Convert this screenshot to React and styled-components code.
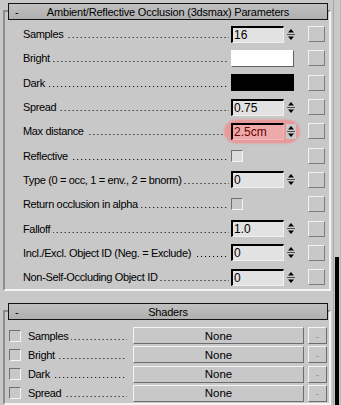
import React from 'react'
import styled, { createGlobalStyle } from 'styled-components'

const Global = createGlobalStyle`
  html, body { margin: 0; padding: 0; }
  body {
    background: #c8c8c8;
    font-family: "Liberation Sans", Arial, sans-serif;
    font-size: 11px;
    letter-spacing: -0.35px;
    color: #000;
  }
`

const Page = styled.div`
  width: 341px;
  height: 405px;
  overflow: hidden;
  display: flex;
  background: #c8c8c8;
`

const Column = styled.div`
  width: 331px;
  display: flex;
  flex-direction: column;
`

const ScrollStrip = styled.div`
  width: 10px;
  display: flex;
  flex-direction: column;
  border-left: 2px solid #c8c8c8;
  box-sizing: border-box;
`

const Track = styled.div`
  flex: 1;
  border-left: 1px solid #a8a8a8;
  border-right: 1px solid #b8b8b8;
  display: flex;
  flex-direction: column;
  justify-content: flex-end;
`

const Thumb = styled.div`
  height: 148px;
  margin: 0 1px;
  background: #000;
`

const Frame = styled.div`
  margin: ${p => p.$top}px 0 0 3px;
  border: 2px solid;
  border-color: #8c8c8c #f4f4f4 #f4f4f4 #8c8c8c;
  display: flex;
  flex-direction: column;
  height: ${p => p.$height}px;
  box-sizing: border-box;
`

const Header = styled.div`
  margin: -9px 1px 0 3px;
  height: 17px;
  box-sizing: border-box;
  border: 1px solid #141414;
  background: linear-gradient(#c0c0c0, #b0b0b0);
  display: grid;
  grid-template-areas: 'bar';
  align-items: center;
  white-space: nowrap;
  letter-spacing: -0.2px;
`

const Toggle = styled.span`
  grid-area: bar;
  justify-self: start;
  padding-left: 6px;
`

const Title = styled.span`
  grid-area: bar;
  justify-self: center;
`

const Rows = styled.div`
  display: flex;
  flex-direction: column;
  padding: 2px 4px 0 18px;
`

const Row = styled.div`
  height: 24.3px;
  display: grid;
  grid-template-columns: 206px 66px 17px;
  column-gap: 2px;
  align-items: center;
  & > :last-child { margin-left: 9px; }
`

const Label = styled.div`
  display: flex;
  align-items: baseline;
  white-space: nowrap;
  overflow: hidden;
`

const Dots = styled.span`
  flex: 1;
  height: 1px;
  margin-left: 3px;
  background-image: linear-gradient(to right, #000 1px, transparent 1px);
  background-size: 4px 1px;
  background-repeat: repeat-x;
  background-position: right;
`

const Spin = styled.div`
  display: flex;
  align-items: center;
  gap: 2px;
  height: 17px;
  border-radius: 9px;
  ${p => p.$hot && `
    background: #e89a9a;
    box-shadow: 0 0 2px 3px #e89a9a, -4px 0 2px 3px #e89a9a;
  `}
`

const Field = styled.div`
  width: 53px;
  height: 17px;
  box-sizing: border-box;
  border-top: 2px solid #000;
  border-left: 2px solid #000;
  border-bottom: 1px solid ${p => (p.$hot ? '#f0b8b8' : '#f0f0f0')};
  border-right: 1px solid ${p => (p.$hot ? '#f0b8b8' : '#f0f0f0')};
  background: ${p => (p.$hot ? '#eeaaaa' : '#e2e2e2')};
  color: ${p => (p.$hot ? '#6a0000' : '#000')};
  font-size: 12px;
  letter-spacing: 0;
  line-height: 14px;
  padding-left: 1px;
`

const Arrows = styled.svg`
  width: 10px;
  height: 15px;
  display: block;
`

const Swatch = styled.div`
  width: 63px;
  height: 17px;
  box-sizing: border-box;
  background: ${p => p.$color};
  border: 1px solid;
  border-color: ${p => (p.$color === '#fff' ? '#fff #606060 #606060 #fff' : '#000')};
`

const Check = styled.div`
  width: 12px;
  height: 12px;
  box-sizing: border-box;
  border: 1px solid;
  border-color: #707070 #f4f4f4 #f4f4f4 #707070;
  background: ${p => (p.$light ? '#dcdcdc' : '#c8c8c8')};
`

const Square = styled.div`
  width: 17px;
  height: 16px;
  box-sizing: border-box;
  border: 1px solid;
  border-color: #f2f2f2 #7c7c7c #7c7c7c #f2f2f2;
  background: #c8c8c8;
`

const ShaderRows = styled.div`
  display: flex;
  flex-direction: column;
  gap: 2.2px;
  padding: 7px 2px 0 4px;
`

const ShaderRow = styled.div`
  height: 17px;
  display: grid;
  grid-template-columns: 12px 112px 171px 23px;
  align-items: center;
  & > :nth-child(2) { margin-left: 7px; padding-right: 6px; }
  & > :last-child { margin-left: 4px; }
`

const Btn = styled.div`
  height: 17px;
  box-sizing: border-box;
  border: 1px solid;
  border-color: #f4f4f4 #6c6c6c #6c6c6c #f4f4f4;
  background: #c8c8c8;
  display: flex;
  align-items: center;
  justify-content: center;
  font-size: 11.5px;
  letter-spacing: 0;
  color: ${p => (p.$dim ? '#9a9a9a' : '#000')};
`

const SpinArrows = () => (
  <Arrows viewBox="0 0 10 15">
    <rect x="0" y="0" width="10" height="15" fill="#c8c8c8" />
    <path d="M5 2 L8 5.5 L2 5.5 Z" fill="#000" />
    <line x1="1" y1="7.5" x2="9" y2="7.5" stroke="#505050" strokeWidth="1" />
    <path d="M2 9.5 L8 9.5 L5 13 Z" fill="#000" />
  </Arrows>
)

const params = [
  { label: 'Samples', kind: 'spin', value: '16' },
  { label: 'Bright', kind: 'swatch', color: '#fff' },
  { label: 'Dark', kind: 'swatch', color: '#000' },
  { label: 'Spread', kind: 'spin', value: '0.75' },
  { label: 'Max distance', kind: 'spin', value: '2.5cm', hot: true },
  { label: 'Reflective', kind: 'check', light: true },
  { label: 'Type (0 = occ, 1 = env., 2 = bnorm)', kind: 'spin', value: '0' },
  { label: 'Return occlusion in alpha', kind: 'check' },
  { label: 'Falloff', kind: 'spin', value: '1.0' },
  { label: 'Incl./Excl. Object ID (Neg. = Exclude)', kind: 'spin', value: '0' },
  { label: 'Non-Self-Occluding Object ID', kind: 'spin', value: '0' },
]

const shaders = ['Samples', 'Bright', 'Dark', 'Spread']

function Control({ p }) {
  if (p.kind === 'swatch') return <Swatch $color={p.color} />
  if (p.kind === 'check') return <div><Check $light={p.light} /></div>
  return (
    <Spin $hot={p.hot}>
      <Field $hot={p.hot}>{p.value}</Field>
      <SpinArrows />
    </Spin>
  )
}

export default function App() {
  return (
    <Page>
      <Global />
      <Column>
        <Frame $top={10} $height={282}>
          <Header>
            <Toggle>-</Toggle>
            <Title>Ambient/Reflective Occlusion (3dsmax) Parameters</Title>
          </Header>
          <Rows>
            {params.map(p => (
              <Row key={p.label}>
                <Label>{p.label}<Dots /></Label>
                <Control p={p} />
                <Square />
              </Row>
            ))}
          </Rows>
        </Frame>
        <Frame $top={19} $height={120}>
          <Header>
            <Toggle>-</Toggle>
            <Title>Shaders</Title>
          </Header>
          <ShaderRows>
            {shaders.map(s => (
              <ShaderRow key={s}>
                <Check />
                <Label>{s}<Dots /></Label>
                <Btn>None</Btn>
                <Btn $dim>-</Btn>
              </ShaderRow>
            ))}
          </ShaderRows>
        </Frame>
      </Column>
      <ScrollStrip>
        <Track>
          <Thumb />
        </Track>
      </ScrollStrip>
    </Page>
  )
}
